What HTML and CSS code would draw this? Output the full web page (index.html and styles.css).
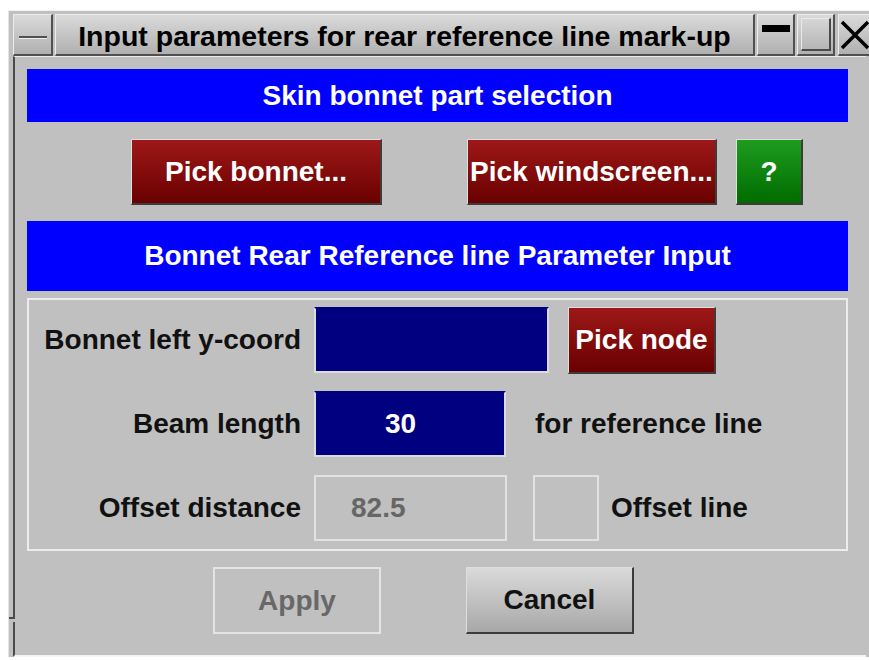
FILE: index.html
```html
<!DOCTYPE html>
<html lang="en">
<head>
    <meta charset="UTF-8">
    <meta name="viewport" content="width=device-width, initial-scale=1.0">
    <title>Input parameters for rear reference line mark-up</title>
    <link rel="stylesheet" href="styles.css">
</head>
<body>
    <div class="window">
        <div class="titlebar">
            <div class="tb-btn tb-menu"><span class="menu-bar"></span></div>
            <div class="tb-btn tb-title">Input parameters for rear reference line mark-up</div>
            <div class="tb-btn tb-min"><span class="min-bar"></span></div>
            <div class="tb-btn tb-max"><span class="max-box"></span></div>
            <div class="tb-btn tb-close">
                <svg width="30" height="30" viewBox="0 0 30 30">
                    <path d="M2 2 L28 28 M28 2 L2 28" stroke="#000" stroke-width="3.5" fill="none"/>
                </svg>
            </div>
        </div>
        <div class="panel">
            <div class="banner">Skin bonnet part selection</div>
            <div class="pick-row">
                <button class="btn btn-red btn-bonnet" type="button">Pick bonnet...</button>
                <button class="btn btn-red btn-screen" type="button">Pick windscreen...</button>
                <button class="btn btn-green btn-help" type="button">?</button>
            </div>
            <div class="banner banner-tall">Bonnet Rear Reference line Parameter Input</div>
            <div class="group">
                <div class="row">
                    <label class="row-label">Bonnet left y-coord</label>
                    <div class="field field-navy field-wide"></div>
                    <button class="btn btn-red btn-node" type="button">Pick node</button>
                </div>
                <div class="row">
                    <label class="row-label">Beam length</label>
                    <div class="field field-navy field-mid"><span class="val-beam">30</span></div>
                    <span class="row-note">for reference line</span>
                </div>
                <div class="row">
                    <label class="row-label">Offset distance</label>
                    <div class="field field-off"><span class="val-offset">82.5</span></div>
                    <div class="check"></div>
                    <span class="check-label">Offset line</span>
                </div>
            </div>
            <div class="actions">
                <button class="btn btn-disabled" type="button">Apply</button>
                <button class="btn btn-gray" type="button">Cancel</button>
            </div>
        </div>
    </div>
</body>
</html>
```

FILE: styles.css
```css
html, body {
    margin: 0;
    overflow: hidden;
}
body {
    background: #fff;
    font-family: "Liberation Sans", Arial, sans-serif;
    font-weight: bold;
    font-size: 28px;
    color: #111;
}
.window {
    position: relative;
    margin: 10px 0 0 8px;
    width: 880px;
    background: #c0c0c0;
    border-top: 1px solid #f2f2f2;
    border-left: 1px solid #e4e4e4;
    padding: 3px 0 0 4px;
}
/* resize handle notch on the left frame */
.window::after {
    content: "";
    position: absolute;
    left: 0;
    top: 606px;
    width: 6px;
    height: 3px;
    background: #c0c0c0;
    border-top: 2px solid #4a4a4a;
}

.titlebar {
    display: flex;
    height: 42px;
}
.tb-btn {
    box-sizing: border-box;
    height: 42px;
    background: linear-gradient(#dadada, #b0b0b0);
    border-top: 1px solid #ececec;
    border-left: 1px solid #ececec;
    border-right: 2px solid #505050;
    border-bottom: 2px solid #505050;
    display: flex;
    justify-content: center;
}
.tb-menu {
    width: 40px;
    margin-right: 2px;
    align-items: center;
    padding-top: 5px;
}
.menu-bar {
    width: 28px;
    height: 2px;
    background: #505050;
    border-bottom: 1px solid #eee;
}
.tb-title {
    width: 700px;
    margin-right: 2px;
    align-items: center;
    padding-top: 3px;
    color: #000;
    font-size: 28.5px;
    white-space: nowrap;
}
.tb-min {
    width: 38px;
    margin-right: 2px;
    align-items: flex-start;
    padding-top: 10px;
}
.min-bar {
    width: 28px;
    height: 7px;
    background: #000;
}
.tb-max {
    width: 38px;
    margin-right: 3px;
    align-items: flex-start;
    padding-top: 3px;
}
.max-box {
    box-sizing: border-box;
    width: 30px;
    height: 33px;
    border-top: 1px solid #e8e8e8;
    border-left: 1px solid #e8e8e8;
    border-right: 2px solid #4a4a4a;
    border-bottom: 2px solid #4a4a4a;
}
.tb-close {
    width: 40px;
    justify-content: flex-start;
    align-items: center;
    padding-left: 1px;
}

.panel {
    width: 821px;
    border-top: 1px solid #ececec;
    border-left: 2px solid #4a4a4a;
    border-bottom: 2px solid #f4f4f4;
    padding: 12px 18px 21px 12px;
}
.banner {
    height: 53px;
    background: #0000ff;
    color: #fff;
    display: flex;
    align-items: center;
    justify-content: center;
    white-space: nowrap;
}
.banner-tall {
    height: 70px;
}

.btn {
    box-sizing: border-box;
    font: inherit;
    height: 66px;
    padding: 0;
    border-style: solid;
    border-width: 1px 2px 2px 1px;
    border-color: #dedede #3c3c3c #3c3c3c #dedede;
    white-space: nowrap;
    cursor: pointer;
}
.btn-red {
    background: linear-gradient(#9e1818, #6a0000);
    color: #fff;
}
.btn-green {
    background: linear-gradient(#1e9c1e, #006c00);
    color: #fff;
}
.pick-row {
    display: flex;
    margin: 17px 0 16px;
    padding-left: 104px;
}
.btn-bonnet {
    width: 251px;
}
.btn-screen {
    width: 250px;
    margin-left: 85px;
}
.btn-help {
    width: 67px;
    margin-left: 19px;
}

.group {
    margin-top: 7px;
    border: 2px solid #ececec;
    padding: 7px 0 8px;
    display: flex;
    flex-direction: column;
    gap: 18px;
}
.row {
    display: flex;
    align-items: center;
    height: 66px;
}
.row-label {
    width: 272px;
    margin-right: 13px;
    text-align: right;
    white-space: nowrap;
}
.field {
    box-sizing: border-box;
    height: 66px;
    border: 2px solid #dcdcdc;
    display: flex;
    align-items: center;
}
.field-navy {
    background: #000080;
    border-top-color: #000080;
    color: #fff;
}
.field-wide {
    width: 235px;
}
.field-mid {
    width: 192px;
}
.field-off {
    width: 193px;
    border-color: #e2e2e2;
    color: #666;
}
.val-beam {
    padding-left: 69px;
}
.val-offset {
    padding-left: 35px;
}
.btn-node {
    width: 148px;
    height: 67px;
    margin-left: 19px;
}
.row-note {
    margin-left: 29px;
    white-space: nowrap;
}
.check {
    box-sizing: border-box;
    width: 66px;
    height: 66px;
    margin-left: 26px;
    border: 2px solid #e2e2e2;
}
.check-label {
    margin-left: 12px;
    white-space: nowrap;
}

.actions {
    display: flex;
    gap: 85px;
    margin-top: 16px;
    padding-left: 186px;
}
.actions .btn {
    width: 168px;
    height: 67px;
}
.btn-disabled {
    background: transparent;
    border: 2px solid #e4e4e4;
    color: #686868;
}
.btn-gray {
    background: linear-gradient(#dadada, #a8a8a8);
    color: #111;
}
```
